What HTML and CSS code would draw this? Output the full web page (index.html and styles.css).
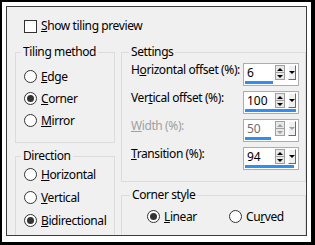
FILE: index.html
```html
<!DOCTYPE html>
<html lang="en">
<head>
    <meta charset="UTF-8">
    <title>Tiling</title>
    <link rel="stylesheet" href="styles.css">
</head>
<body>
    <div class="frame">
        <div class="panel">
            <div class="check"><span class="box"></span><span><u>S</u>how tiling preview</span></div>

            <div class="cols">
                <div class="col">
                    <!-- Tiling method -->
                    <fieldset class="group tiling">
                        <legend>Tiling method</legend>
                        <div class="opt"><span class="radio"></span><span><u>E</u>dge</span></div>
                        <div class="opt"><span class="radio on"></span><span><u>C</u>orner</span></div>
                        <div class="opt"><span class="radio"></span><span><u>M</u>irror</span></div>
                    </fieldset>

                    <!-- Direction -->
                    <fieldset class="group direction">
                        <legend>Direction</legend>
                        <div class="opt"><span class="radio"></span><span><u>H</u>orizontal</span></div>
                        <div class="opt"><span class="radio"></span><span><u>V</u>ertical</span></div>
                        <div class="opt"><span class="radio on"></span><span><u>B</u>idirectional</span></div>
                    </fieldset>
                </div>

                <div class="col">
                    <!-- Settings -->
                    <fieldset class="group settings">
                        <legend>Settings</legend>
                        <div class="field">
                            <span class="lbl">H<u>o</u>rizontal offset (%):</span>
                            <div class="spin">
                                <div class="spin-row">
                                    <span class="val">6</span>
                                    <span class="arrows"><span class="up"></span><span class="down"></span></span>
                                    <span class="drop"></span>
                                </div>
                                <div class="bar" style="width: 28px"></div>
                            </div>
                        </div>
                        <div class="field">
                            <span class="lbl">Ver<u>t</u>ical offset (%):</span>
                            <div class="spin">
                                <div class="spin-row">
                                    <span class="val">100</span>
                                    <span class="arrows"><span class="up"></span><span class="down"></span></span>
                                    <span class="drop"></span>
                                </div>
                                <div class="bar" style="width: 51px"></div>
                            </div>
                        </div>
                        <div class="field disabled">
                            <span class="lbl"><u>W</u>idth (%):</span>
                            <div class="spin">
                                <div class="spin-row">
                                    <span class="val">50</span>
                                    <span class="arrows"><span class="up"></span><span class="down"></span></span>
                                    <span class="drop"></span>
                                </div>
                                <div class="bar" style="width: 26px"></div>
                            </div>
                        </div>
                        <div class="field">
                            <span class="lbl"><u>T</u>ransition (%):</span>
                            <div class="spin">
                                <div class="spin-row">
                                    <span class="val">94</span>
                                    <span class="arrows"><span class="up"></span><span class="down"></span></span>
                                    <span class="drop"></span>
                                </div>
                                <div class="bar" style="width: 49px"></div>
                            </div>
                        </div>
                    </fieldset>

                    <!-- Corner style -->
                    <fieldset class="group corner">
                        <legend>Corner style</legend>
                        <div class="opts">
                            <div class="opt linear"><span class="radio on"></span><span><u>L</u>inear</span></div>
                            <div class="opt"><span class="radio"></span><span>Cu<u>r</u>ved</span></div>
                        </div>
                    </fieldset>
                </div>
            </div>
        </div>
    </div>
</body>
</html>
```

FILE: styles.css
```css
body {
    margin: 0;
    font-family: "Noto Sans", "Open Sans", sans-serif;
    font-size: 12px;
    letter-spacing: -0.4px;
    color: #000;
    background-color: #000;
}

.frame {
    width: 315px;
    height: 245px;
    box-sizing: border-box;
    border-style: solid;
    border-color: #000;
    border-width: 2px 4px 3px 2px;
    padding: 4px;
    background-color: #fff;
}

.panel {
    height: 230px;
    box-sizing: border-box;
    border: 1px solid #3c3c3c;
    background-color: #f0f0f0;
    padding: 12px 0 0 8px;
    overflow: hidden;
}

.check {
    display: flex;
    align-items: center;
    gap: 4px;
    height: 14px;
    line-height: 14px;
    margin-left: 9px;
}

.box {
    width: 13px;
    height: 13px;
    box-sizing: border-box;
    border: 1px solid #333;
    background-color: #fff;
}

.cols {
    display: flex;
    gap: 6px;
    margin-top: 12px;
}

.col {
    display: flex;
    flex-direction: column;
    gap: 6px;
}

.col:first-child {
    width: 100px;
}

.col:last-child {
    width: 185px;
}

.group {
    margin: 0;
    min-width: 0;
    border: 1px solid #dcdcdc;
    padding: 0 8px;
}

.group legend {
    padding: 0 2px;
    margin-left: -3px;
    line-height: 14px;
}

.opt {
    display: flex;
    align-items: center;
    gap: 4px;
    height: 22px;
    white-space: nowrap;
}

.radio {
    flex: none;
    width: 13px;
    height: 13px;
    box-sizing: border-box;
    border: 1px solid #333;
    border-radius: 50%;
    background-color: #fff;
    display: flex;
    align-items: center;
    justify-content: center;
}

.radio.on::after {
    content: "";
    width: 7px;
    height: 7px;
    border-radius: 50%;
    background-color: #333;
}

.tiling {
    padding-top: 6px;
    padding-bottom: 11px;
}

.direction {
    padding-bottom: 20px;
}

.direction .opt {
    height: 23px;
}

.settings {
    padding: 4px 6px 11px 9px;
    display: flex;
    flex-direction: column;
    gap: 5px;
}

.settings legend {
    margin-left: -2px;
}

.field {
    display: flex;
    justify-content: space-between;
    align-items: flex-start;
    line-height: 14px;
}

.lbl {
    white-space: nowrap;
}

.disabled .lbl {
    color: #a0a0a0;
}

.spin {
    flex: none;
    width: 56px;
    height: 23px;
    box-sizing: border-box;
    border: 1px solid #abadb3;
    background-color: #fff;
    padding: 1px 2px 1px 1px;
    display: flex;
    flex-direction: column;
    gap: 1px;
    letter-spacing: 0;
}

.spin-row {
    display: flex;
    align-items: flex-start;
    height: 15px;
}

.val {
    flex: 1;
    padding-left: 2px;
    line-height: 15px;
}

.disabled .val {
    color: #6d6d6d;
}

.arrows {
    width: 10px;
    height: 15px;
    box-sizing: border-box;
    border: 1px solid #a0a0a0;
    background-color: #e8e8e8;
    display: flex;
    flex-direction: column;
    margin-right: 3px;
}

.arrows span {
    flex: 1;
    display: flex;
    align-items: center;
    justify-content: center;
}

.arrows .up {
    border-bottom: 1px solid #a0a0a0;
}

.arrows .up::after {
    content: "";
    border-left: 3px solid transparent;
    border-right: 3px solid transparent;
    border-bottom: 3px solid #000;
}

.arrows .down::after {
    content: "";
    border-left: 3px solid transparent;
    border-right: 3px solid transparent;
    border-top: 3px solid #000;
}

.drop {
    width: 8px;
    height: 15px;
    box-sizing: border-box;
    border-style: solid;
    border-width: 1px;
    border-color: #fff #696969 #696969 #fff;
    background-color: #f0f0f0;
    display: flex;
    justify-content: center;
    padding-top: 5px;
}

.drop::after {
    content: "";
    width: 0;
    height: 0;
    border-left: 3px solid transparent;
    border-right: 3px solid transparent;
    border-top: 3px solid #000;
}

.disabled .arrows .up::after {
    border-bottom-color: #a0a0a0;
}

.disabled .arrows .down::after,
.disabled .drop::after {
    border-top-color: #a0a0a0;
}

.bar {
    height: 3px;
    background-color: #2f8ff0;
}

.corner {
    padding: 3px 8px 20px 9px;
}

.corner legend {
    margin-left: -1px;
}

.opts {
    display: flex;
    padding-left: 16px;
}

.opts .linear {
    width: 82px;
}
```
